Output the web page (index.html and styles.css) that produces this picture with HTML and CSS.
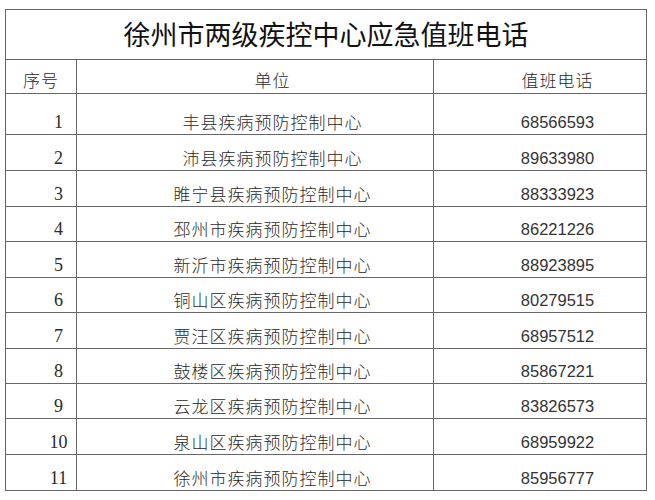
FILE: index.html
```html
<!DOCTYPE html>
<html lang="zh">
<head>
<meta charset="utf-8">
<title>徐州市两级疾控中心应急值班电话</title>
<link rel="stylesheet" href="styles.css">
</head>
<body>
<div class="sheet">
  <div class="cell title">徐州市两级疾控中心应急值班电话</div>
  <div class="cell head first">序号</div>
  <div class="cell head">单位</div>
  <div class="cell head">值班电话</div>

  <div class="cell num">1</div><div class="cell unit">丰县疾病预防控制中心</div><div class="cell tel">68566593</div>
  <div class="cell num">2</div><div class="cell unit">沛县疾病预防控制中心</div><div class="cell tel">89633980</div>
  <div class="cell num">3</div><div class="cell unit">睢宁县疾病预防控制中心</div><div class="cell tel">88333923</div>
  <div class="cell num">4</div><div class="cell unit">邳州市疾病预防控制中心</div><div class="cell tel">86221226</div>
  <div class="cell num">5</div><div class="cell unit">新沂市疾病预防控制中心</div><div class="cell tel">88923895</div>
  <div class="cell num">6</div><div class="cell unit">铜山区疾病预防控制中心</div><div class="cell tel">80279515</div>
  <div class="cell num">7</div><div class="cell unit">贾汪区疾病预防控制中心</div><div class="cell tel">68957512</div>
  <div class="cell num">8</div><div class="cell unit">鼓楼区疾病预防控制中心</div><div class="cell tel">85867221</div>
  <div class="cell num">9</div><div class="cell unit">云龙区疾病预防控制中心</div><div class="cell tel">83826573</div>
  <div class="cell num">10</div><div class="cell unit">泉山区疾病预防控制中心</div><div class="cell tel">68959922</div>
  <div class="cell num">11</div><div class="cell unit">徐州市疾病预防控制中心</div><div class="cell tel">85956777</div>
</div>
</body>
</html>
```

FILE: styles.css
```css
html, body {
  margin: 0;
  padding: 0;
  background: #ffffff;
}

body {
  padding: 9px 0 0 5px;
  color: #2a2a2a;
  font-family: "Noto Sans CJK SC", "Noto Sans", sans-serif;
}

.sheet {
  display: grid;
  width: 642px;
  box-sizing: border-box;
  grid-template-columns: 71px 357px 213px;
  grid-template-rows: 50px 34px 41px 36px 36px 35px 36px 35px 36px 35px 35px 36px 36px;
  border-top: 1px solid #666666;
  border-left: 1px solid #666666;
}

.cell {
  box-sizing: border-box;
  border-right: 1px solid #666666;
  border-bottom: 1px solid #666666;
  display: flex;
  justify-content: center;
  align-items: flex-end;
  font-size: 17px;
  font-weight: 300;
  line-height: 20px;
  letter-spacing: 1px;
  padding-left: 35px;
  padding-bottom: 2px;
  white-space: nowrap;
}

.title {
  grid-column: 1 / 4;
  align-items: center;
  padding: 0 0 2px 0;
  font-size: 27px;
  font-weight: 400;
  line-height: 34px;
  letter-spacing: 0;
  color: #111111;
}

.head {
  padding-bottom: 3px;
}

.head.first {
  padding-left: 0;
}

.num {
  font-family: "Liberation Serif", serif;
  font-weight: 400;
  font-size: 18px;
  letter-spacing: 0;
}

.tel {
  font-family: "Liberation Sans", sans-serif;
  font-weight: 400;
  font-size: 16.5px;
  letter-spacing: 0;
  color: #333333;
}
```
